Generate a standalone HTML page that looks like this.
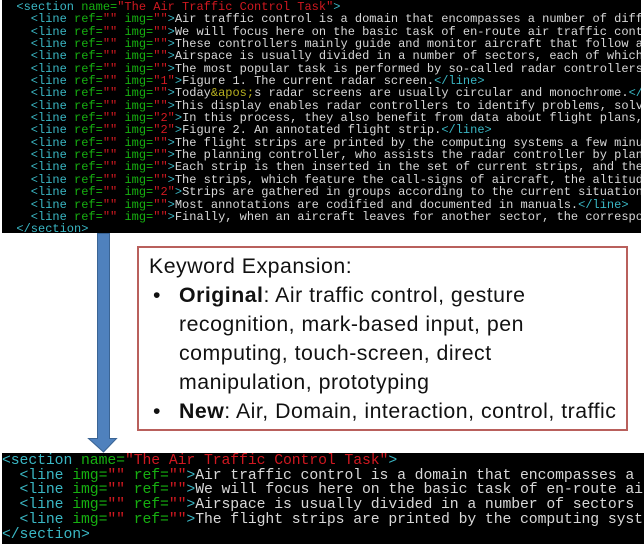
<!DOCTYPE html>
<html><head><meta charset="utf-8"><style>
*{margin:0;padding:0}
body{width:644px;height:543px;background:#fff;position:relative;overflow:hidden}
.term{position:absolute;background:#000;font-family:"Liberation Mono",monospace;white-space:pre;overflow:hidden;color:#d8d8d8}
#t1{left:2px;top:0;width:639px;height:232px;font-size:12px;line-height:12.35px;padding-top:1px}
#t2{left:2px;top:453px;width:642px;height:90px;font-size:14.8px;line-height:14.7px;padding-top:1px;letter-spacing:-0.1px}
.c{color:#3ab7c4}.g{color:#16b010}.r{color:#d01820}.y{color:#b8b020}
#box{position:absolute;left:137px;top:246px;width:487px;height:181px;border:2px solid #b9605c;background:#fff;font-family:"Liberation Sans",sans-serif;font-size:21.3px;color:#111;line-height:29px;letter-spacing:0.5px}
#box .h{position:absolute;left:10px;top:4px}
#box .b{position:absolute;left:14px}
#box .t{position:absolute;left:40px;width:460px;white-space:nowrap}
</style></head><body>
<div class="term" id="t1"><span class="c">  &lt;section </span><span class="g">name=</span><span class="r">"The Air Traffic Control Task"</span><span class="c">&gt;</span>
<span class="c">    &lt;line </span><span class="g">ref=</span><span class="r">""</span> <span class="g">img=</span><span class="r">""</span><span class="c">&gt;</span>Air traffic control is a domain that encompasses a number of different
<span class="c">    &lt;line </span><span class="g">ref=</span><span class="r">""</span> <span class="g">img=</span><span class="r">""</span><span class="c">&gt;</span>We will focus here on the basic task of en-route air traffic control
<span class="c">    &lt;line </span><span class="g">ref=</span><span class="r">""</span> <span class="g">img=</span><span class="r">""</span><span class="c">&gt;</span>These controllers mainly guide and monitor aircraft that follow a
<span class="c">    &lt;line </span><span class="g">ref=</span><span class="r">""</span> <span class="g">img=</span><span class="r">""</span><span class="c">&gt;</span>Airspace is usually divided in a number of sectors, each of which
<span class="c">    &lt;line </span><span class="g">ref=</span><span class="r">""</span> <span class="g">img=</span><span class="r">""</span><span class="c">&gt;</span>The most popular task is performed by so-called radar controllers
<span class="c">    &lt;line </span><span class="g">ref=</span><span class="r">""</span> <span class="g">img=</span><span class="r">"1"</span><span class="c">&gt;</span>Figure 1. The current radar screen.<span class="c">&lt;/line&gt;</span>
<span class="c">    &lt;line </span><span class="g">ref=</span><span class="r">""</span> <span class="g">img=</span><span class="r">""</span><span class="c">&gt;</span>Today<span class="y">&amp;apos;</span>s radar screens are usually circular and monochrome.<span class="c">&lt;/line&gt;</span>
<span class="c">    &lt;line </span><span class="g">ref=</span><span class="r">""</span> <span class="g">img=</span><span class="r">""</span><span class="c">&gt;</span>This display enables radar controllers to identify problems, solve
<span class="c">    &lt;line </span><span class="g">ref=</span><span class="r">""</span> <span class="g">img=</span><span class="r">"2"</span><span class="c">&gt;</span>In this process, they also benefit from data about flight plans,
<span class="c">    &lt;line </span><span class="g">ref=</span><span class="r">""</span> <span class="g">img=</span><span class="r">"2"</span><span class="c">&gt;</span>Figure 2. An annotated flight strip.<span class="c">&lt;/line&gt;</span>
<span class="c">    &lt;line </span><span class="g">ref=</span><span class="r">""</span> <span class="g">img=</span><span class="r">""</span><span class="c">&gt;</span>The flight strips are printed by the computing systems a few minutes
<span class="c">    &lt;line </span><span class="g">ref=</span><span class="r">""</span> <span class="g">img=</span><span class="r">""</span><span class="c">&gt;</span>The planning controller, who assists the radar controller by planning
<span class="c">    &lt;line </span><span class="g">ref=</span><span class="r">""</span> <span class="g">img=</span><span class="r">""</span><span class="c">&gt;</span>Each strip is then inserted in the set of current strips, and the
<span class="c">    &lt;line </span><span class="g">ref=</span><span class="r">""</span> <span class="g">img=</span><span class="r">""</span><span class="c">&gt;</span>The strips, which feature the call-signs of aircraft, the altitude
<span class="c">    &lt;line </span><span class="g">ref=</span><span class="r">""</span> <span class="g">img=</span><span class="r">"2"</span><span class="c">&gt;</span>Strips are gathered in groups according to the current situation
<span class="c">    &lt;line </span><span class="g">ref=</span><span class="r">""</span> <span class="g">img=</span><span class="r">""</span><span class="c">&gt;</span>Most annotations are codified and documented in manuals.<span class="c">&lt;/line&gt;</span>
<span class="c">    &lt;line </span><span class="g">ref=</span><span class="r">""</span> <span class="g">img=</span><span class="r">""</span><span class="c">&gt;</span>Finally, when an aircraft leaves for another sector, the corresponding
<span class="c">  &lt;/section&gt;</span></div>

<svg style="position:absolute;left:0;top:0" width="644" height="543">
<path d="M97.5 233.5 H109.5 V438.5 H116.5 L103.5 452 L88.5 438.5 H97.5 Z" fill="#4f81bd" stroke="#3a6494" stroke-width="1"/>
</svg>

<div id="box">
<div class="h">Keyword Expansion:</div>
<div class="b" style="top:33px">•</div>
<div class="t" style="top:33px"><b>Original</b>: Air traffic control, gesture<br>recognition, mark-based input, pen<br>computing, touch-screen, direct<br>manipulation, prototyping</div>
<div class="b" style="top:149px">•</div>
<div class="t" style="top:149px"><b>New</b>: Air, Domain, interaction, control, traffic</div>
</div>

<div class="term" id="t2"><span class="c">&lt;section </span><span class="g">name=</span><span class="r">"The Air Traffic Control Task"</span><span class="c">&gt;</span>
<span class="c">  &lt;line </span><span class="g">img=</span><span class="r">""</span> <span class="g">ref=</span><span class="r">""</span><span class="c">&gt;</span>Air traffic control is a domain that encompasses a
<span class="c">  &lt;line </span><span class="g">img=</span><span class="r">""</span> <span class="g">ref=</span><span class="r">""</span><span class="c">&gt;</span>We will focus here on the basic task of en-route air
<span class="c">  &lt;line </span><span class="g">img=</span><span class="r">""</span> <span class="g">ref=</span><span class="r">""</span><span class="c">&gt;</span>Airspace is usually divided in a number of sectors
<span class="c">  &lt;line </span><span class="g">img=</span><span class="r">""</span> <span class="g">ref=</span><span class="r">""</span><span class="c">&gt;</span>The flight strips are printed by the computing systems
<span class="c">&lt;/section&gt;</span></div>
</body></html>
